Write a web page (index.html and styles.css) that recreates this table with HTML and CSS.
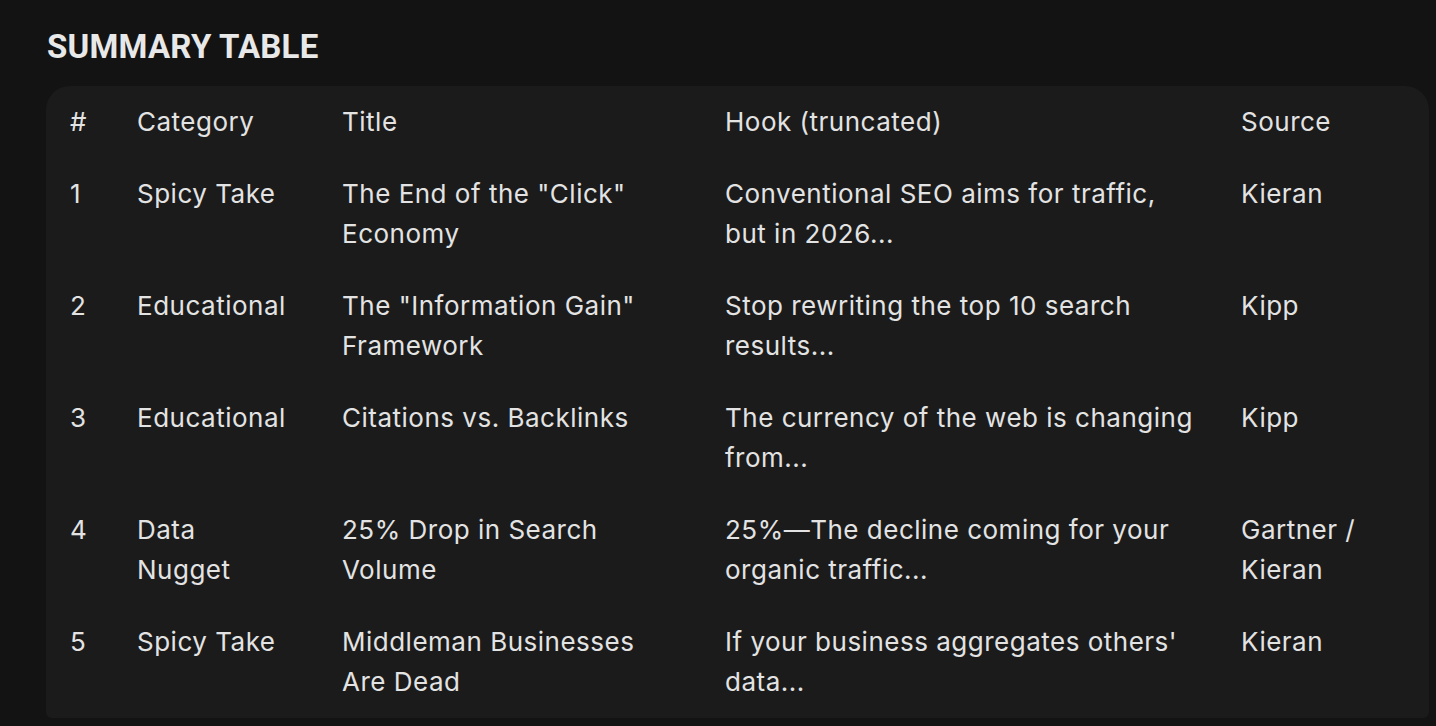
FILE: index.html
```html
<!DOCTYPE html>
<html lang="en">
<head>
<meta charset="utf-8">
<title>Summary Table</title>
<link rel="stylesheet" href="styles.css">
</head>
<body>
<main class="page">
  <h2 class="heading">SUMMARY TABLE</h2>
  <div class="card">
    <table class="summary">
      <colgroup>
        <col class="c-num">
        <col class="c-cat">
        <col class="c-title">
        <col class="c-hook">
        <col class="c-src">
      </colgroup>
      <thead>
        <tr><th>#</th><th>Category</th><th>Title</th><th class="hook">Hook (truncated)</th><th>Source</th></tr>
      </thead>
      <tbody>
        <tr><td>1</td><td>Spicy Take</td><td>The End of the "Click" Economy</td><td class="hook">Conventional SEO aims for traffic, but in 2026...</td><td>Kieran</td></tr>
        <tr><td>2</td><td>Educational</td><td>The "Information Gain" Framework</td><td class="hook">Stop rewriting the top 10 search results...</td><td>Kipp</td></tr>
        <tr><td>3</td><td>Educational</td><td>Citations vs. Backlinks</td><td class="hook">The currency of the web is changing from...</td><td>Kipp</td></tr>
        <tr><td>4</td><td>Data Nugget</td><td>25% Drop in Search Volume</td><td class="hook">25%—The decline coming for your organic traffic...</td><td>Gartner / Kieran</td></tr>
        <tr><td>5</td><td>Spicy Take</td><td>Middleman Businesses Are Dead</td><td class="hook">If your business aggregates others' data...</td><td>Kieran</td></tr>
      </tbody>
    </table>
  </div>
</main>
</body>
</html>
```
FILE: styles.css
```css
html, body {
  margin: 0;
  padding: 0;
  background: #131313;
}
.page {
  padding: 25px 6px 0 46px;
  font-family: Inter, Roboto, "Liberation Sans", sans-serif;
  color: #e3e3e3;
}
.heading {
  margin: 0 0 17px 1px;
  font-family: Roboto, "Liberation Sans", sans-serif;
  font-size: 33px;
  line-height: 44px;
  font-weight: 700;
  letter-spacing: 0.2px;
  color: #e8e8e8;
}
.card {
  width: 1383px;
  background: #1b1b1b;
  border-radius: 24px 24px 6px 6px;
  overflow: hidden;
}
.summary {
  width: 100%;
  border-collapse: collapse;
  table-layout: fixed;
  font-size: 26px;
  line-height: 40px;
  letter-spacing: 0.5px;
}
.c-num { width: 67px; }
.c-cat { width: 205px; }
.c-title { width: 383px; }
.c-hook { width: 516px; }
.c-src { width: 212px; }
.summary th,
.summary td {
  padding: 16px 24px;
  text-align: left;
  vertical-align: top;
  font-weight: 400;
}
.summary .hook {
  padding-right: 16px;
}
```
